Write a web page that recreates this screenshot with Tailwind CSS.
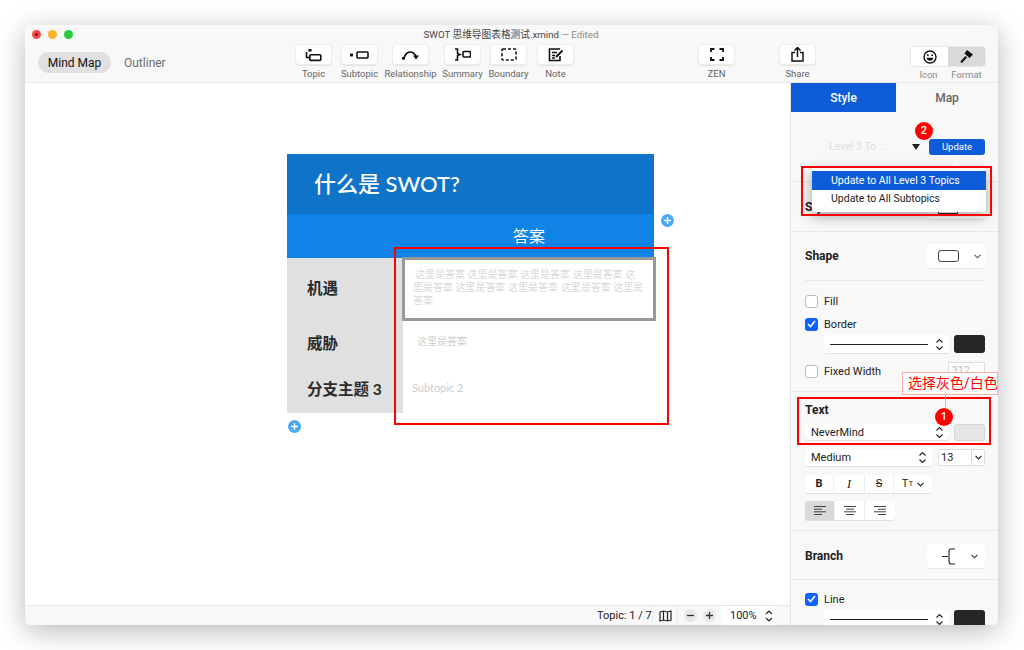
<!DOCTYPE html>
<html lang="zh">
<head>
    <meta charset="UTF-8">
    <title>SWOT</title>
    <script src="https://cdn.jsdelivr.net/npm/@tailwindcss/browser@4"></script>
</head>
<body class="bg-white w-[1024px] h-[650px] overflow-hidden font-['Roboto','Noto_Sans_CJK_SC',sans-serif]">
    <div class="relative ml-[25px] mt-[25px] w-[973px] h-[600px] rounded-[5px] overflow-hidden bg-white">
        <!-- title + toolbar -->
        <header class="h-[58px] bg-[#f8f8f8] border-b border-[#e6e6e6]">
            <div class="relative h-[19px] flex items-center justify-center pt-[1px] text-[9.7px] text-[#444]">
                <div class="absolute left-[7px] top-[5px] flex gap-[7px]">
                    <span class="w-[9px] h-[9px] rounded-full bg-[#f7474a] flex items-center justify-center"><span class="w-[3px] h-[3px] rounded-full bg-[#6e1012]"></span></span>
                    <span class="w-[9px] h-[9px] rounded-full bg-[#fdb12d]"></span>
                    <span class="w-[9px] h-[9px] rounded-full bg-[#2ac83f]"></span>
                </div>
                <span class="mr-[1px]">SWOT 思维导图表格测试.xmind <span class="text-[#8a8a8a]">— Edited</span></span>
            </div>
            <div class="flex items-start h-[38px]">
                <div class="w-[270px] shrink-0 pl-[13px] pt-[8px] flex items-center text-[12px]">
                    <span class="w-[73px] h-[21px] rounded-full bg-[#e0e0e0] flex items-center justify-center text-[#111]">Mind Map</span>
                    <span class="ml-[13px] text-[#6e6e6e]">Outliner</span>
                </div>
                <!-- Topic -->
                <div class="w-[37px] flex flex-col items-center">
                    <div class="w-[37px] h-[21px] bg-white rounded-[4px] border border-[#ececec] shadow-[0_1px_1px_rgba(0,0,0,0.08)] flex items-center justify-center">
                        <svg width="17" height="14" viewBox="0 0 17 14" fill="none" stroke="#111" stroke-width="1.6"><rect x="4.8" y="6.8" width="11" height="5.6" rx="1"/><path d="M1.500 4v5.500h3"/><rect x="3.500" y="1" width="3" height="2.600" fill="#111" stroke="none"/></svg>
                    </div>
                    <span class="mt-[2px] whitespace-nowrap text-[9.5px] leading-[14px] text-[#666]">Topic</span>
                </div>
                <!-- Subtopic -->
                <div class="ml-[9px] w-[37px] flex flex-col items-center">
                    <div class="w-[37px] h-[21px] bg-white rounded-[4px] border border-[#ececec] shadow-[0_1px_1px_rgba(0,0,0,0.08)] flex items-center justify-center">
                        <svg width="19" height="8" viewBox="0 0 19 8" fill="none" stroke="#111" stroke-width="1.6"><rect x="7" y="1" width="11" height="6" rx="1"/><rect x="0" y="2.600" width="3" height="2.800" fill="#111" stroke="none"/></svg>
                    </div>
                    <span class="mt-[2px] whitespace-nowrap text-[9.5px] leading-[14px] text-[#666]">Subtopic</span>
                </div>
                <!-- Relationship -->
                <div class="ml-[14px] w-[37px] flex flex-col items-center">
                    <div class="w-[37px] h-[21px] bg-white rounded-[4px] border border-[#ececec] shadow-[0_1px_1px_rgba(0,0,0,0.08)] flex items-center justify-center">
                        <svg width="18" height="11" viewBox="0 0 18 11" fill="none" stroke="#111" stroke-width="1.7"><path d="M2 9C4 2.500 10 .5 14 7"/><path d="M11 6.500h6l-3 4z" fill="#111" stroke="none"/><rect x="0" y="8" width="3" height="2.600" fill="#111" stroke="none"/></svg>
                    </div>
                    <span class="mt-[2px] whitespace-nowrap text-[9.5px] leading-[14px] text-[#666]">Relationship</span>
                </div>
                <!-- Summary -->
                <div class="ml-[15px] w-[37px] flex flex-col items-center">
                    <div class="w-[37px] h-[21px] bg-white rounded-[4px] border border-[#ececec] shadow-[0_1px_1px_rgba(0,0,0,0.08)] flex items-center justify-center">
                        <svg width="17" height="13" viewBox="0 0 17 13" fill="none" stroke="#111" stroke-width="1.6"><path d="M1 1h2.500v4.500L6 6.500 3.500 7.500V12H1"/><rect x="9" y="3.500" width="7.500" height="5.500" rx="1"/></svg>
                    </div>
                    <span class="mt-[2px] whitespace-nowrap text-[9.5px] leading-[14px] text-[#666]">Summary</span>
                </div>
                <!-- Boundary -->
                <div class="ml-[9px] w-[37px] flex flex-col items-center">
                    <div class="w-[37px] h-[21px] bg-white rounded-[4px] border border-[#ececec] shadow-[0_1px_1px_rgba(0,0,0,0.08)] flex items-center justify-center">
                        <svg width="16" height="13" viewBox="0 0 16 13" fill="none" stroke="#111" stroke-width="1.6" stroke-dasharray="3 2"><rect x="1" y="1" width="14" height="11" rx="1"/></svg>
                    </div>
                    <span class="mt-[2px] whitespace-nowrap text-[9.5px] leading-[14px] text-[#666]">Boundary</span>
                </div>
                <!-- Note -->
                <div class="ml-[10px] w-[37px] flex flex-col items-center">
                    <div class="w-[37px] h-[21px] bg-white rounded-[4px] border border-[#ececec] shadow-[0_1px_1px_rgba(0,0,0,0.08)] flex items-center justify-center">
                        <svg width="16" height="14" viewBox="0 0 16 14" fill="none" stroke="#111" stroke-width="1.6"><path d="M12 1H1.500v11.500H12V8"/><path d="M4 4.500h5M4 7.500h3M4 10h3"/><path d="M8 9l6.500-6.500" stroke-width="2"/></svg>
                    </div>
                    <span class="mt-[2px] whitespace-nowrap text-[9.5px] leading-[14px] text-[#666]">Note</span>
                </div>
                <!-- ZEN -->
                <div class="ml-[124px] w-[37px] flex flex-col items-center">
                    <div class="w-[37px] h-[21px] bg-white rounded-[4px] border border-[#ececec] shadow-[0_1px_1px_rgba(0,0,0,0.08)] flex items-center justify-center">
                        <svg width="14" height="13" viewBox="0 0 14 13" fill="none" stroke="#111" stroke-width="1.8"><path d="M1 4V1h3.500M9.500 1H13v3M13 9v3H9.500M4.500 12H1V9"/></svg>
                    </div>
                    <span class="mt-[2px] whitespace-nowrap text-[9.5px] leading-[14px] text-[#666]">ZEN</span>
                </div>
                <!-- Share -->
                <div class="ml-[44px] w-[37px] flex flex-col items-center">
                    <div class="w-[37px] h-[21px] bg-white rounded-[4px] border border-[#ececec] shadow-[0_1px_1px_rgba(0,0,0,0.08)] flex items-center justify-center">
                        <svg width="13" height="15" viewBox="0 0 13 15" fill="none" stroke="#111" stroke-width="1.5"><path d="M4 5.500H1v8.500h11V5.500H9"/><path d="M6.500 10V1M3.500 3.500l3-3 3 3"/></svg>
                    </div>
                    <span class="mt-[2px] whitespace-nowrap text-[9.5px] leading-[14px] text-[#666]">Share</span>
                </div>
                <!-- Icon / Format -->
                <div class="ml-[94px] mt-[2px] w-[76px]">
                    <div class="h-[21px] flex rounded-[4px] overflow-hidden border border-[#e8e8e8] bg-white">
                        <div class="w-[37px] flex items-center justify-center">
                            <svg width="14" height="14" viewBox="0 0 14 14" fill="none" stroke="#111" stroke-width="1.4"><circle cx="7" cy="7" r="6"/><circle cx="4.800" cy="5.200" r="1" fill="#111" stroke="none"/><circle cx="9.200" cy="5.200" r="1" fill="#111" stroke="none"/><path d="M3.500 7.800h7c-.5 4-6.500 4-7 0z" fill="#111" stroke="none"/></svg>
                        </div>
                        <div class="flex-1 bg-[#d9d9d9] flex items-center justify-center">
                            <svg width="13" height="13" viewBox="0 0 13 13" fill="#111" stroke="none"><path d="M7 0l6 4.500-3.500 3.500L4.500 3.500z"/><path d="M5.500 6l1.500 1.500-5 5.500-1.800-1.300z"/></svg>
                        </div>
                    </div>
                    <div class="flex text-[9.5px] leading-[14px] mt-[1px] text-[#8a8a8a]">
                        <span class="w-[37px] text-center">Icon</span>
                        <span class="flex-1 text-center">Format</span>
                    </div>
                </div>
            </div>
        </header>

        <div class="flex h-[542px]">
            <!-- canvas -->
            <main class="relative w-[765px] flex flex-col">
                <div class="relative flex-1 bg-white">
                    <div class="absolute left-[262px] top-[71px] w-[367px] font-['Lato','Noto_Sans_CJK_SC',sans-serif]">
                        <div class="h-[60px] bg-[#0f73c7] pl-[27px] pb-[2px] flex items-center text-white text-[22px] font-medium">什么是 SWOT?</div>
                        <div class="h-[44px] bg-[#0f83e6] flex items-center text-white text-[16px] pl-[226px]">答案</div>
                        <div class="flex">
                            <div class="w-[116px] shrink-0 h-[155px] bg-[#e0e0e0] pl-[20px] text-[15.5px] font-bold text-[#2a2a2a] flex flex-col whitespace-nowrap">
                                <span class="mt-[19px] leading-[22px]">机遇</span>
                                <span class="mt-[33px] leading-[22px]">威胁</span>
                                <span class="mt-[24px] leading-[22px]">分支主题 3</span>
                            </div>
                            <div class="flex-1 min-w-0 text-[#d0d0d0] text-[10px]">
                                <div class="-ml-[1px] -mt-[1px] w-[254px] h-[64px] border-[3px] border-[#999] pl-[8px] pt-[8px] leading-[13px] bg-white text-[#d8d8d8] whitespace-nowrap">
                                    <span class="block pl-[2px]">这里是答案 这里是答案 这里是答案 这里是答案 这</span>
                                    <span class="block">里是答案 这里是答案 这里是答案 这里是答案 这里是</span>
                                    <span class="block">答案</span>
                                </div>
                                <div class="ml-[14px] mt-[13px] leading-[14px]">这里是答案</div>
                                <div class="ml-[9px] mt-[33px] leading-[14px] text-[11px] text-[#ccc]">Subtopic 2</div>
                            </div>
                        </div>
                    </div>
                    <span class="absolute left-[636px] top-[131px] w-[13px] h-[13px] rounded-full bg-[#4aa8f8] flex items-center justify-center text-white">
                        <svg width="9" height="9" viewBox="0 0 9 9" stroke="#fff" stroke-width="1.4"><path d="M4.500 1v7M1 4.500h7"/></svg>
                    </span>
                    <span class="absolute left-[263px] top-[337px] w-[13px] h-[13px] rounded-full bg-[#4aa8f8] flex items-center justify-center">
                        <svg width="9" height="9" viewBox="0 0 9 9" stroke="#fff" stroke-width="1.4"><path d="M4.500 1v7M1 4.500h7"/></svg>
                    </span>
                    <div class="absolute left-[369px] top-[164px] w-[275px] h-[178px] border-2 border-[#f00]"></div>
                </div>
                <footer class="h-[20px] bg-[#f8f8f8] border-t border-[#e6e6e6] flex items-center text-[11px] text-[#222]">
                    <span class="ml-[572px] w-[55px] pt-[2px] whitespace-nowrap">Topic: 1 / 7</span>
                    <span class="h-full w-[26px] border-x border-[#ececec] flex items-center justify-center">
                        <svg width="13" height="12" viewBox="0 0 13 12" fill="none" stroke="#222" stroke-width="1.2"><path d="M1 2l3.500-1 4 1 3.500-1v9l-3.500 1-4-1L1 11z"/><path d="M4.500 1v9M8.500 2v9"/></svg>
                    </span>
                    <span class="ml-[6px] w-[13px] h-[13px] rounded-full bg-[#e8e8e8] flex items-center justify-center">
                        <svg width="7" height="7" viewBox="0 0 7 7" stroke="#333" stroke-width="1.3"><path d="M0 3.500h7"/></svg>
                    </span>
                    <span class="ml-[6px] w-[13px] h-[13px] rounded-full bg-[#e8e8e8] flex items-center justify-center">
                        <svg width="7" height="7" viewBox="0 0 7 7" stroke="#333" stroke-width="1.3"><path d="M0 3.500h7M3.500 0v7"/></svg>
                    </span>
                    <span class="ml-[6px] w-[54px] h-[19px] bg-white rounded-[3px] flex items-center pl-[8px] justify-between pr-[3px]"><span class="pt-[1px]">100%</span>
                        <svg width="8" height="12" viewBox="0 0 8 12" fill="none" stroke="#222" stroke-width="1.2"><path d="M1 4l3-3 3 3M1 8l3 3 3-3"/></svg>
                    </span>
                </footer>
            </main>

            <!-- format panel -->
            <aside class="w-[208px] bg-[#f8f8f8] border-l border-[#e6e6e6] text-[11px] text-[#222] overflow-hidden">
                <div class="h-[29px] flex text-[12px] font-medium">
                    <div class="w-[105px] bg-[#0f5cd8] text-white flex items-center justify-center">Style</div>
                    <div class="flex-1 flex items-center justify-center text-[#666]">Map</div>
                </div>
                <div class="h-[70px] border-b border-[#e8e8e8] flex items-start pt-[27px] pl-[38px]">
                    <span class="w-[83px] text-[10.5px] leading-[16px] text-[#dedede]">Level 3 To...</span>
                    <svg class="mt-[5px]" width="8" height="6" viewBox="0 0 8 6" fill="#222"><path d="M0 0h8L4 6z"/></svg>
                    <span class="ml-[9px] w-[56px] h-[16px] rounded-[3px] bg-[#0f5cd8] text-white text-[9.5px] flex items-center justify-center">Update</span>
                </div>
                <div class="h-[50px] border-b border-[#e8e8e8] flex items-center justify-between pl-[14px] pr-[13px]">
                    <span class="font-bold text-[12px]">Style</span>
                    <span class="w-[58px] h-[25px] bg-white rounded-[3px] shadow-[0_1px_1px_rgba(0,0,0,0.08)] flex items-center pl-[11px]">
                        <span class="w-[20px] h-[14px] border border-[#333]"></span>
                    </span>
                </div>
                <div class="h-[49px] mx-[14px] mr-[13px] border-b border-[#e8e8e8] flex items-center justify-between">
                    <span class="font-bold text-[12px]">Shape</span>
                    <span class="w-[58px] h-[24px] bg-white rounded-[3px] shadow-[0_1px_1px_rgba(0,0,0,0.08)] flex items-center pl-[11px]">
                        <span class="w-[21px] h-[12px] rounded-[3px] border border-[#444]"></span>
                        <svg class="ml-[15px]" width="7" height="5" viewBox="0 0 7 5" fill="none" stroke="#555" stroke-width="1.1"><path d="M.5 .8l3 3 3-3"/></svg>
                    </span>
                </div>
                <div class="h-[111px] border-b border-[#e8e8e8] pl-[14px] pr-[13px] pt-[11px]">
                    <div class="h-[18px] flex items-center gap-[6px]">
                        <span class="w-[13px] h-[13px] rounded-[3px] bg-white border border-[#bbb]"></span><span class="pt-[2px]">Fill</span>
                    </div>
                    <div class="mt-[5px] h-[18px] flex items-center gap-[6px]">
                        <span class="w-[13px] h-[13px] rounded-[3px] bg-[#0f62fe] flex items-center justify-center">
                            <svg width="9" height="8" viewBox="0 0 9 8" fill="none" stroke="#fff" stroke-width="1.6"><path d="M1 4l2.500 2.500L8 1"/></svg>
                        </span><span class="pt-[2px]">Border</span>
                    </div>
                    <div class="mt-[2px] ml-[19px] flex justify-between">
                        <span class="w-[125px] h-[18px] bg-white rounded-[3px] shadow-[0_1px_1px_rgba(0,0,0,0.1)] flex items-center pl-[6px] pr-[6px] gap-[8px]">
                            <span class="w-[98px] h-px bg-[#222]"></span>
                            <svg width="7" height="11" viewBox="0 0 7 11" fill="none" stroke="#222" stroke-width="1.1"><path d="M.5 3.500l3-3 3 3M.5 7.500l3 3 3-3"/></svg>
                        </span>
                        <span class="w-[31px] h-[18px] bg-[#262626] rounded-[3px]"></span>
                    </div>
                    <div class="mt-[9px] h-[18px] flex items-center gap-[6px]">
                        <span class="w-[13px] h-[13px] rounded-[3px] bg-white border border-[#bbb]"></span><span class="pt-[2px]">Fixed Width</span>
                        <span class="ml-auto w-[37px] h-[18px] bg-white border border-[#ddd] text-[#bbb] text-[10.5px] pl-[3px] leading-[16px]">312</span>
                    </div>
                </div>
                <div class="h-[139px] border-b border-[#e8e8e8] pl-[14px] pr-[13px] pt-[11px]">
                    <div class="h-[14px] font-bold text-[12px] leading-[14px]">Text</div>
                    <div class="mt-[7px] flex justify-between">
                        <span class="w-[144px] h-[16px] bg-white rounded-[3px] shadow-[0_1px_1px_rgba(0,0,0,0.1)] flex items-center justify-between pl-[6px] pr-[6px]"><span class="pt-[2px]">NeverMind</span>
                            <svg width="7" height="11" viewBox="0 0 7 11" fill="none" stroke="#222" stroke-width="1.1"><path d="M.5 3.500l3-3 3 3M.5 7.500l3 3 3-3"/></svg>
                        </span>
                        <span class="w-[31px] h-[17px] bg-[#e6e6e6] rounded-[3px] border border-[#d4d4d4]"></span>
                    </div>
                    <div class="mt-[8px] flex justify-between">
                        <span class="w-[127px] h-[17px] bg-white rounded-[3px] shadow-[0_1px_1px_rgba(0,0,0,0.1)] flex items-center justify-between pl-[6px] pr-[6px]"><span class="pt-[2px]">Medium</span>
                            <svg width="7" height="11" viewBox="0 0 7 11" fill="none" stroke="#222" stroke-width="1.1"><path d="M.5 3.500l3-3 3 3M.5 7.500l3 3 3-3"/></svg>
                        </span>
                        <span class="w-[47px] h-[17px] bg-white border border-[#ddd] rounded-[2px] flex items-center">
                            <span class="w-[33px] pl-[2px] border-r border-[#ddd] h-full leading-[16px]">13</span>
                            <svg class="ml-[3px]" width="7" height="5" viewBox="0 0 7 5" fill="none" stroke="#222" stroke-width="1.2"><path d="M.5 .8l3 3 3-3"/></svg>
                        </span>
                    </div>
                    <div class="mt-[9px] w-[127px] h-[18px] bg-white rounded-[3px] shadow-[0_1px_1px_rgba(0,0,0,0.1)] flex divide-x divide-[#eee] text-[#222]">
                        <span class="w-[29px] flex items-center justify-center font-bold">B</span>
                        <span class="w-[31px] flex items-center justify-center italic font-['Liberation_Serif',serif] text-[12px]">I</span>
                        <span class="w-[29px] flex items-center justify-center line-through">S</span>
                        <span class="flex-1 flex items-center justify-center gap-[4px]">T<span class="-ml-[4px] text-[8px]">T</span>
                            <svg width="7" height="5" viewBox="0 0 7 5" fill="none" stroke="#222" stroke-width="1.2"><path d="M.5 .8l3 3 3-3"/></svg>
                        </span>
                    </div>
                    <div class="mt-[8px] w-[90px] h-[19px] bg-white rounded-[3px] shadow-[0_1px_1px_rgba(0,0,0,0.1)] flex divide-x divide-[#eee] overflow-hidden">
                        <span class="w-[30px] bg-[#d9d9d9] flex items-center justify-center">
                            <svg width="12" height="9" viewBox="0 0 12 9" stroke="#444"><path d="M0 .5h12M0 3.200h8M0 5.800h12M0 8.500h8"/></svg>
                        </span>
                        <span class="w-[30px] flex items-center justify-center">
                            <svg width="12" height="9" viewBox="0 0 12 9" stroke="#444"><path d="M0 .5h12M2 3.200h8M0 5.800h12M2 8.500h8"/></svg>
                        </span>
                        <span class="flex-1 flex items-center justify-center">
                            <svg width="12" height="9" viewBox="0 0 12 9" stroke="#444"><path d="M0 .5h12M4 3.200h8M0 5.800h12M4 8.500h8"/></svg>
                        </span>
                    </div>
                </div>
                <div class="h-[49px] border-b border-[#e8e8e8] flex items-center justify-between pl-[14px] pr-[13px] pt-[2px]">
                    <span class="font-bold text-[12px]">Branch</span>
                    <span class="w-[58px] h-[24px] bg-white rounded-[3px] shadow-[0_1px_1px_rgba(0,0,0,0.08)] flex items-center pl-[15px]">
                        <svg width="14" height="17" viewBox="0 0 14 17" fill="none" stroke="#222" stroke-width="1.1"><path d="M0 8.500h6M13 1H9C7 1 7 2.500 7 4v9c0 1.500 0 3 2 3h4"/></svg>
                        <svg class="ml-[15px]" width="7" height="5" viewBox="0 0 7 5" fill="none" stroke="#333" stroke-width="1.1"><path d="M.5 .8l3 3 3-3"/></svg>
                    </span>
                </div>
                <div class="pl-[14px] pr-[13px] pt-[10px]">
                    <div class="h-[18px] flex items-center gap-[6px]">
                        <span class="w-[13px] h-[13px] rounded-[3px] bg-[#0f62fe] flex items-center justify-center">
                            <svg width="9" height="8" viewBox="0 0 9 8" fill="none" stroke="#fff" stroke-width="1.6"><path d="M1 4l2.500 2.500L8 1"/></svg>
                        </span><span class="pt-[2px]">Line</span>
                    </div>
                    <div class="mt-[2px] ml-[19px] flex justify-between">
                        <span class="w-[125px] h-[18px] bg-white rounded-[3px] shadow-[0_1px_1px_rgba(0,0,0,0.1)] flex items-center pl-[6px] pr-[6px] gap-[8px]">
                            <span class="w-[98px] h-px bg-[#222]"></span>
                            <svg width="7" height="11" viewBox="0 0 7 11" fill="none" stroke="#222" stroke-width="1.1"><path d="M.5 3.500l3-3 3 3M.5 7.500l3 3 3-3"/></svg>
                        </span>
                        <span class="w-[31px] h-[18px] bg-[#262626] rounded-[3px]"></span>
                    </div>
                </div>
            </aside>
        </div>

        <!-- popup and annotations on top of the panel -->
        <div class="absolute left-[928px] top-[139px] w-[8px] h-[8px] rotate-45 bg-white"></div>
        <div class="absolute left-[787px] top-[143px] w-[174px] h-[44px] pt-[3px] bg-white rounded-[3px] shadow-[0_4px_14px_rgba(0,0,0,0.35)] text-[10.5px] text-[#222]">
            <div class="h-[19px] bg-[#0f5cd8] text-white flex items-center pl-[19px]">Update to All Level 3 Topics</div>
            <div class="h-[18px] flex items-center pl-[19px]">Update to All Subtopics</div>
        </div>
        <div class="absolute left-[776px] top-[141px] w-[191px] h-[50px] border-2 border-[#f00]"></div>
        <div class="absolute left-[772px] top-[372px] w-[194px] h-[48px] border-2 border-[#f00]"></div>
        <div class="absolute left-[877px] top-[347px] w-[96px] h-[23px] border border-[#f8b0b0] bg-white/80 text-[#f00] text-[14px] leading-[21px] pl-[5px] whitespace-nowrap">选择灰色/白色</div>
        <div class="absolute left-[920px] top-[370px] w-px h-[15px] bg-[#f8b0b0]"></div>
        <span class="absolute left-[910px] top-[383px] w-[18px] h-[18px] rounded-full bg-[#f00] text-white text-[11px] font-medium flex items-center justify-center">1</span>
        <span class="absolute left-[890px] top-[97px] w-[18px] h-[18px] rounded-full bg-[#f00] text-white text-[11px] font-medium flex items-center justify-center">2</span>
    </div>
    <!-- window shadow -->
    <div class="absolute left-[25px] top-[25px] w-[973px] h-[600px] rounded-[5px] shadow-[0_6px_28px_rgba(0,0,0,0.28)] pointer-events-none"></div>
</body>
</html>
